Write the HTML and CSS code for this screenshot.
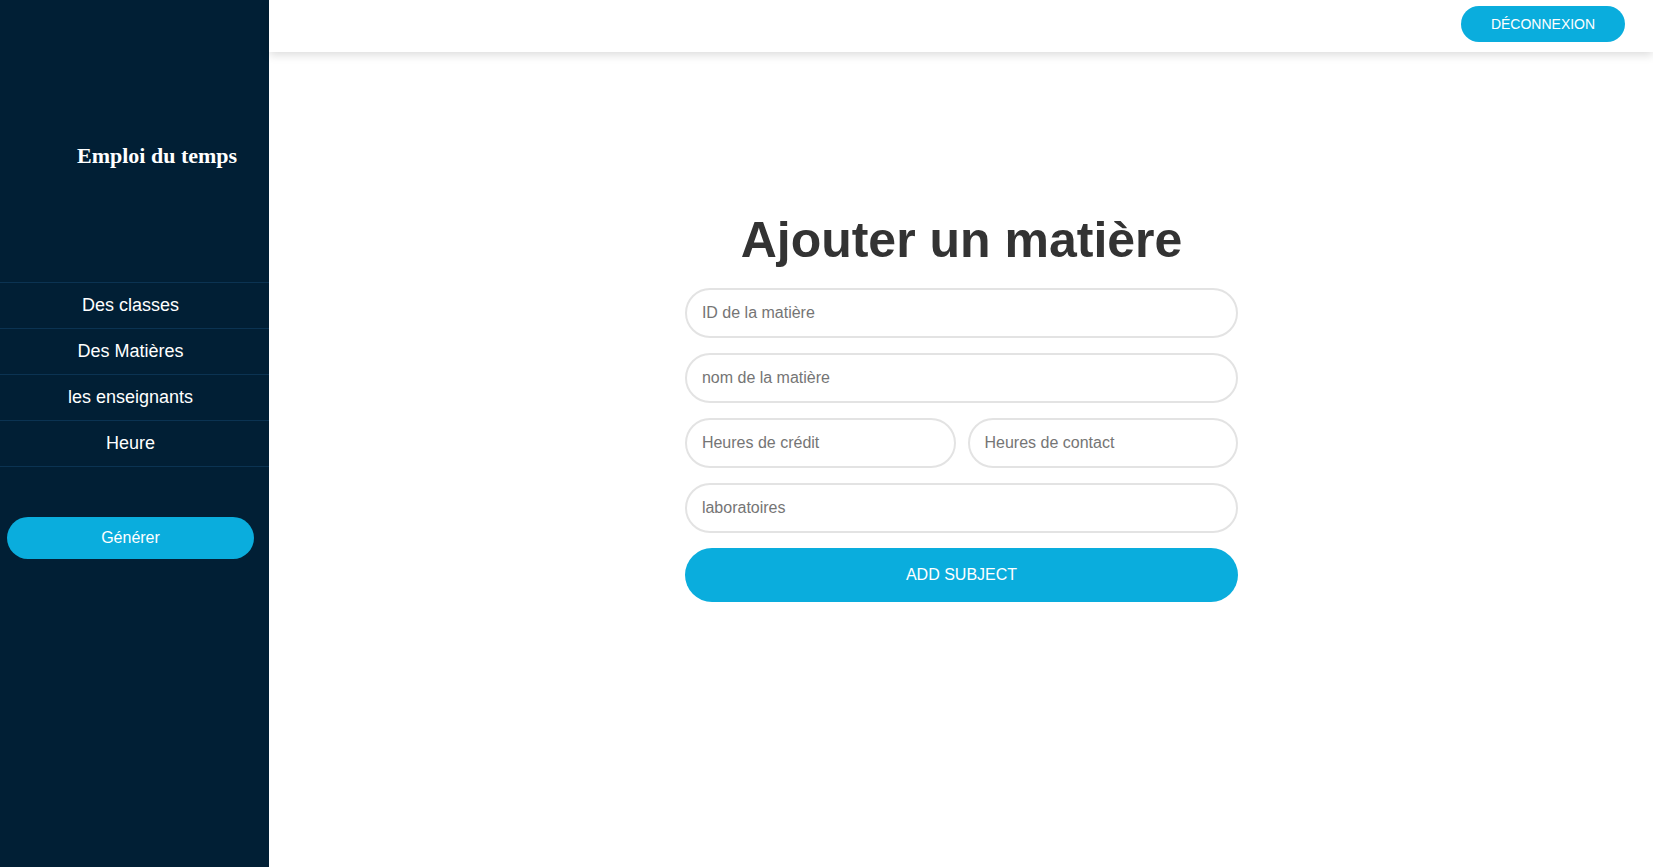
FILE: index.html
```html
<!DOCTYPE html>
<html lang="fr">
<head>
<meta charset="utf-8">
<title>Ajouter un matière</title>
<link rel="stylesheet" href="styles.css">
</head>
<body>
<div class="layout">
  <aside class="sidebar">
    <div class="brand">Emploi du temps</div>
    <nav class="nav">
      <a class="nav-link" href="#">Des classes</a>
      <a class="nav-link" href="#">Des Matières</a>
      <a class="nav-link" href="#">les enseignants</a>
      <a class="nav-link" href="#">Heure</a>
    </nav>
    <button class="generate" type="button">Générer</button>
  </aside>
  <div class="main">
    <header class="topbar">
      <button class="logout" type="button">Déconnexion</button>
    </header>
    <section class="content">
      <form class="form">
        <h1 class="title">Ajouter un matière</h1>
        <input class="field" type="text" placeholder="ID de la matière">
        <input class="field" type="text" placeholder="nom de la matière">
        <div class="row">
          <input class="field" type="text" placeholder="Heures de crédit">
          <input class="field" type="text" placeholder="Heures de contact">
        </div>
        <input class="field" type="text" placeholder="laboratoires">
        <button class="submit" type="button">Add subject</button>
      </form>
    </section>
  </div>
</div>
</body>
</html>
```

FILE: styles.css
```css
* { box-sizing: border-box; }

html, body {
  margin: 0;
  padding: 0;
  height: 100%;
  background: #ffffff;
  font-family: "Liberation Sans", Arial, sans-serif;
}

.layout {
  display: flex;
  height: 867px;
}

.sidebar {
  width: 269px;
  flex: 0 0 269px;
  background: #011f35;
  display: flex;
  flex-direction: column;
}

.brand {
  font-family: "Liberation Serif", "Times New Roman", serif;
  font-weight: bold;
  font-size: 22px;
  line-height: 26px;
  color: #ffffff;
  padding: 143px 0 113px 77px;
}

.nav {
  display: flex;
  flex-direction: column;
  border-top: 1px solid #0b3352;
}

.nav-link {
  display: block;
  color: #ffffff;
  text-decoration: none;
  font-size: 18px;
  line-height: 21px;
  padding: 12px 8px 12px 0;
  text-align: center;
  border-bottom: 1px solid #0b3352;
}

.generate {
  margin: 50px 15px 0 7px;
  height: 42px;
  border: none;
  border-radius: 21px;
  background: #0aaddd;
  color: #ffffff;
  font-family: "Liberation Sans", Arial, sans-serif;
  font-size: 16px;
}

.main {
  flex: 1;
  display: flex;
  flex-direction: column;
  min-width: 0;
}

.topbar {
  height: 52px;
  flex: 0 0 52px;
  background: #ffffff;
  box-shadow: 0 3px 9px rgba(0, 0, 0, 0.14);
  display: flex;
  justify-content: flex-end;
  align-items: flex-start;
  padding: 6px 28px 0 0;
  position: relative;
  z-index: 1;
}

.logout {
  width: 164px;
  height: 36px;
  border: none;
  border-radius: 18px;
  background: #0aaddd;
  color: #ffffff;
  font-family: "Liberation Sans", Arial, sans-serif;
  font-size: 14px;
  text-transform: uppercase;
}

.content {
  flex: 1;
  padding: 160px 0 0 1px;
}

.form {
  width: 40%;
  margin: 0 auto;
  display: flex;
  flex-direction: column;
}

.title {
  margin: 0 0 19px;
  font-size: 50px;
  line-height: 57px;
  font-weight: bold;
  color: #333333;
  text-align: center;
}

.field {
  display: block;
  width: 100%;
  height: 50px;
  margin: 0 0 15px;
  padding: 0 15px;
  border: 2px solid #e3e3e3;
  border-radius: 25px;
  font-family: "Liberation Sans", Arial, sans-serif;
  font-size: 16px;
  color: #333333;
  background: #ffffff;
  outline: none;
}

.field::placeholder {
  color: #757575;
}

.row {
  display: flex;
  gap: 12px;
}

.row .field {
  flex: 1;
  min-width: 0;
}

.submit {
  height: 54px;
  border: none;
  border-radius: 27px;
  background: #0aaddd;
  color: #ffffff;
  font-family: "Liberation Sans", Arial, sans-serif;
  font-size: 16px;
  text-transform: uppercase;
}
```
